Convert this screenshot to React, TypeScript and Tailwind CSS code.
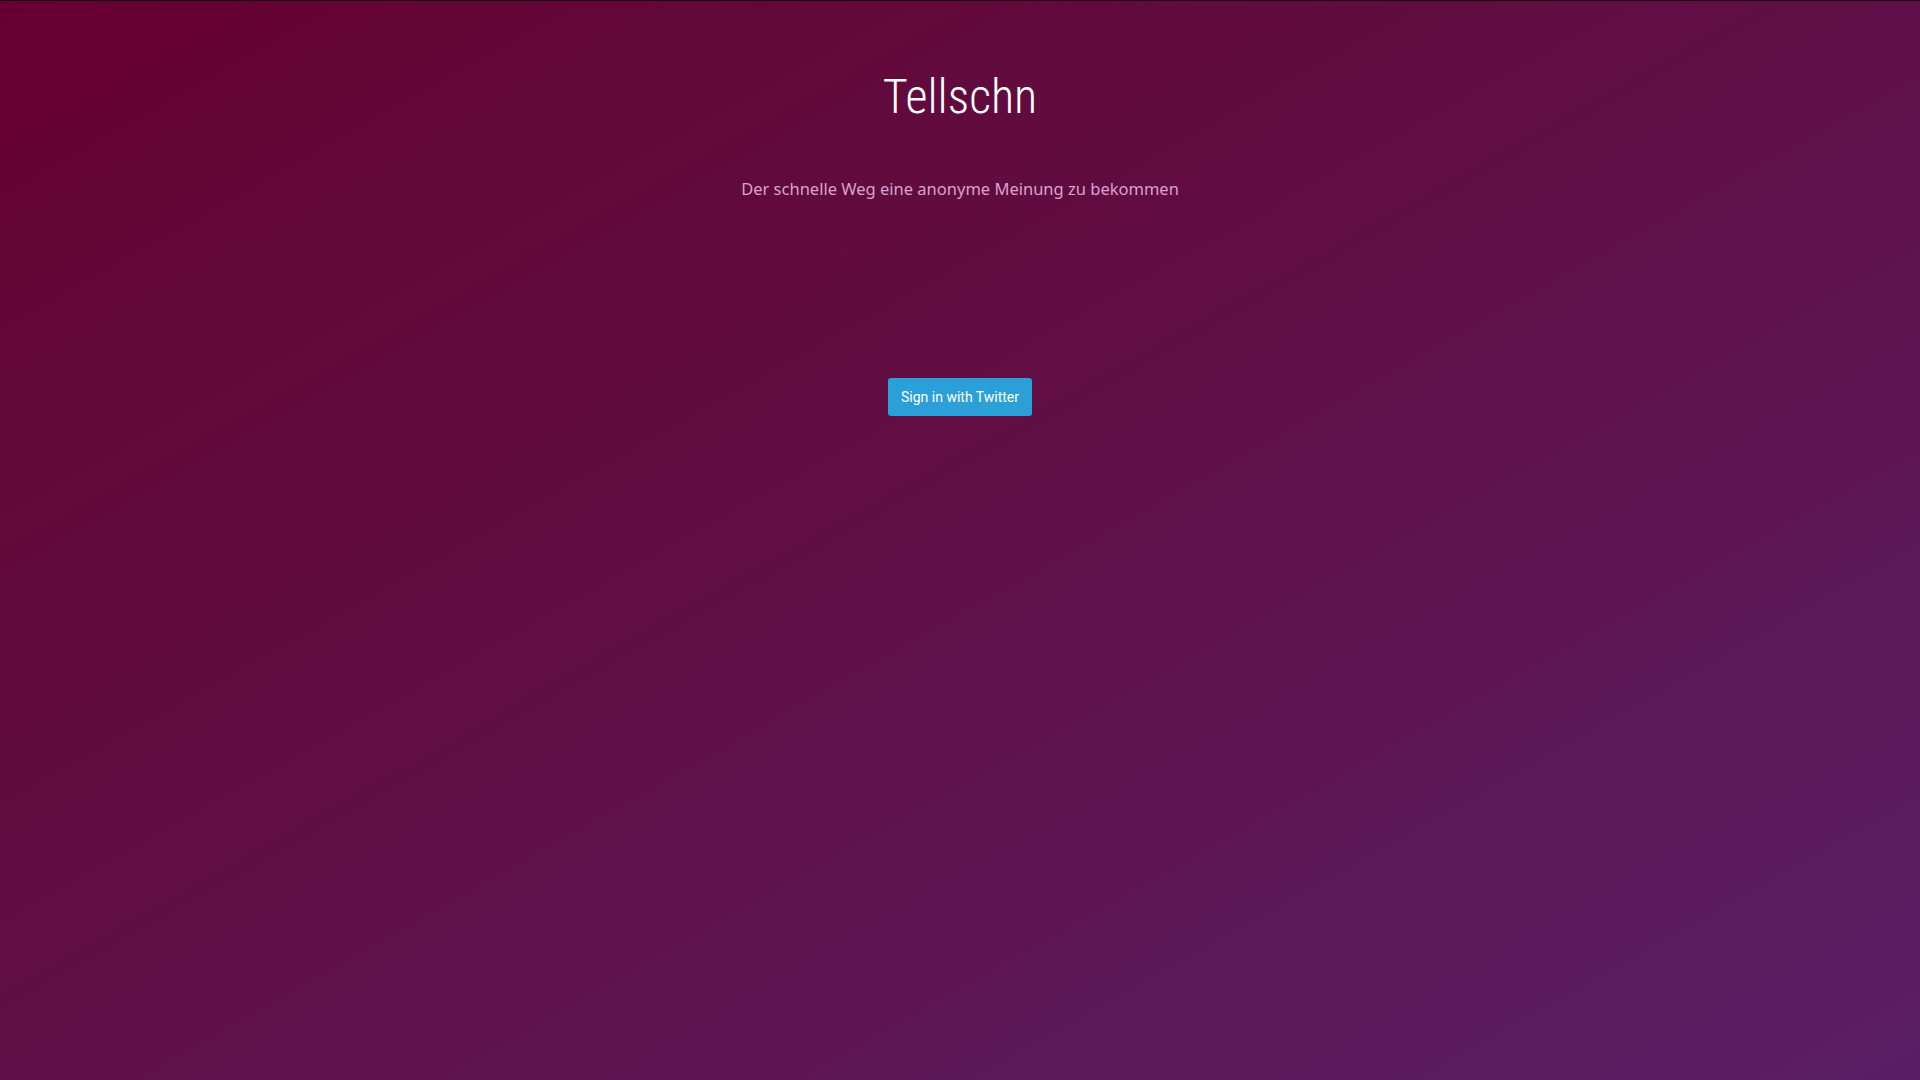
import React from "react";

export default function App() {
  return (
    <div className="min-h-[1080px] w-full bg-linear-to-br from-[#660030] via-[#5f0f47] to-[#5a1d65] border-t border-[#1a0010] flex flex-col items-center">
      <h1 className="mt-[66px] text-[48px] leading-[60px] text-white font-light font-stretch-condensed font-['Roboto',sans-serif]">
        Tellschn
      </h1>
      <p className="mt-[50px] text-[16.5px] leading-[24px] text-[#d9a2cf] font-['Noto_Sans',sans-serif]">
        Der schnelle Weg eine anonyme Meinung zu bekommen
      </p>
      <button className="mt-[177px] h-[38px] w-[144px] rounded-[3px] bg-[#2a9fd8] text-white text-[14px] font-normal font-['Roboto',sans-serif]">
        Sign in with Twitter
      </button>
    </div>
  );
}
